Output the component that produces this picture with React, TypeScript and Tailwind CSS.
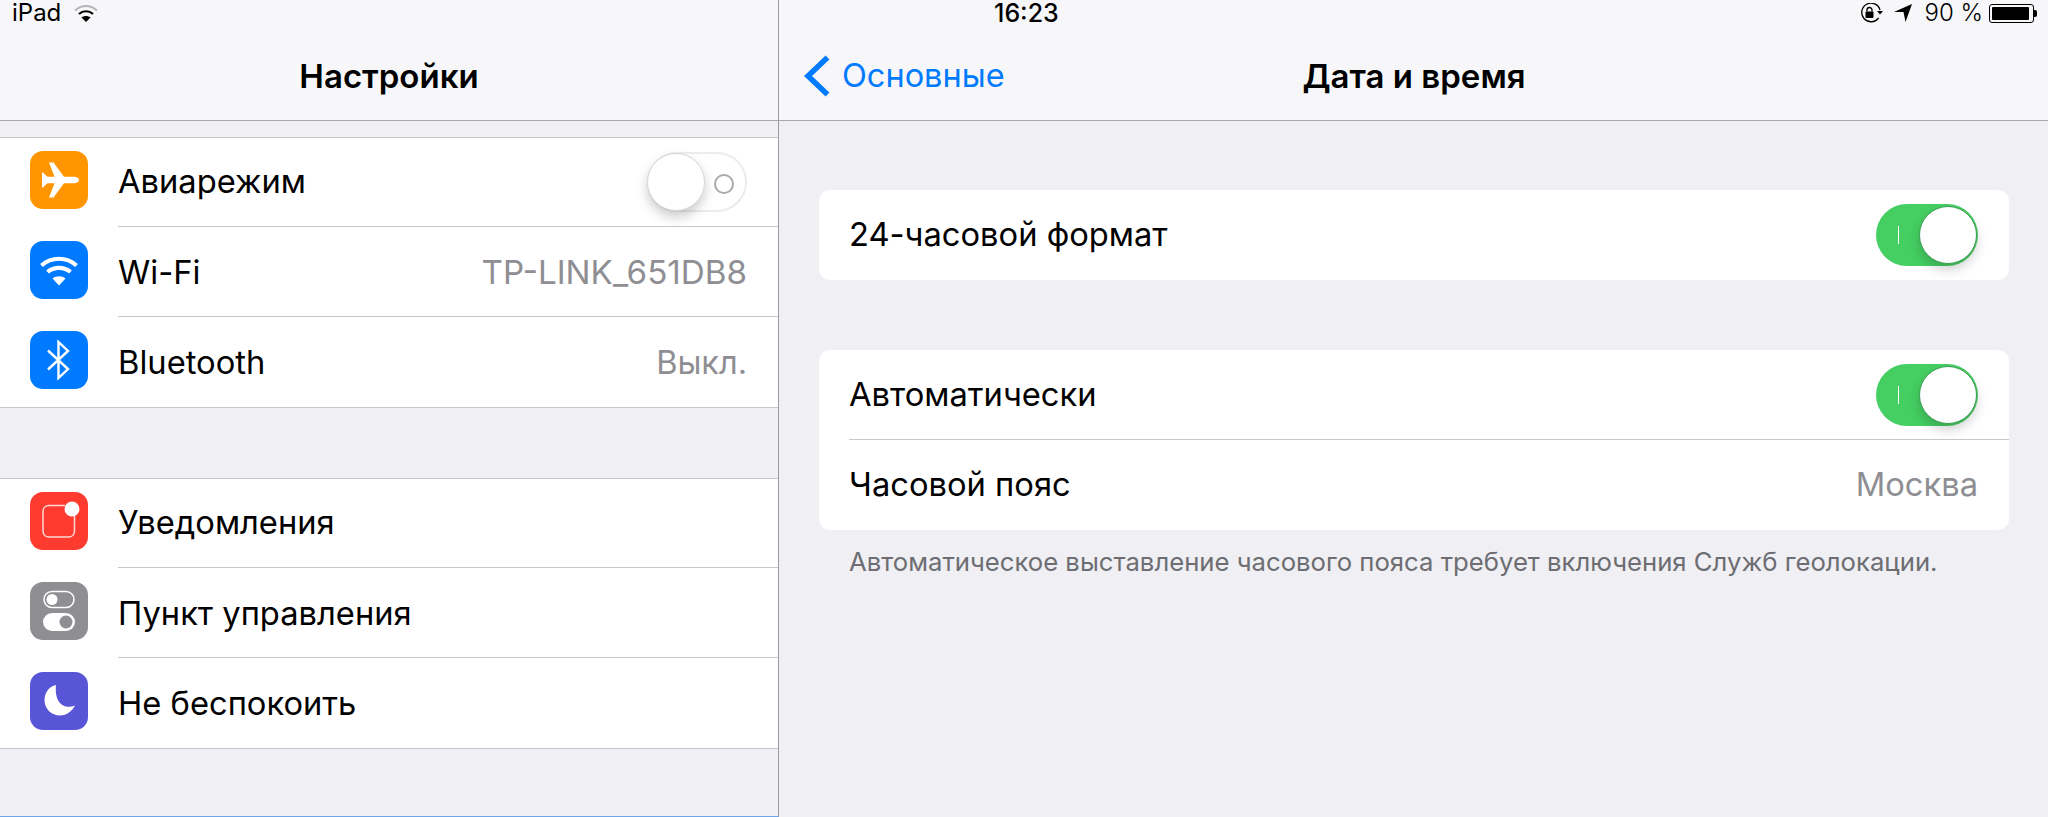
import React from "react";

function Plane() {
  return (
    <svg viewBox="0 0 58 58" className="w-full h-full">
      <path fill="#fff" d="M49 29c0-2.200-3-3.300-5.500-3.300H34L23.500 11.500H19L24.500 25.700H17.500L13 21.500H12V36.500H13L17.500 32.300H24.500L19 46.500H23.500L34 32.300H43.500C46 32.300 49 31.200 49 29Z" />
    </svg>
  );
}
function WifiGlyph() {
  return (
    <svg viewBox="0 0 58 58" className="w-full h-full" fill="none" stroke="#fff">
      <path strokeWidth="4.200" d="M11.500 24.500C21.500 15.500 36.500 15.500 46.500 24.500" />
      <path strokeWidth="4.200" d="M17.500 31C24 25.500 34 25.500 40.500 31" />
      <path fill="#fff" stroke="none" d="M29 44.500 22.500 37.500C26 34.500 32 34.500 35.500 37.500Z" />
    </svg>
  );
}
function BluetoothGlyph() {
  return (
    <svg viewBox="0 0 58 58" className="w-full h-full" fill="none" stroke="#fff" strokeWidth="2.400">
      <path d="M18 19.500 38 38 28.500 47V11L38 20 18 38.500" />
    </svg>
  );
}
function NotifGlyph() {
  return (
    <svg viewBox="0 0 58 58" className="w-full h-full" fill="none">
      <path stroke="#ffd9d6" strokeWidth="1.500" d="M35 13.500H19C15.500 13.500 13 16 13 19.500V39C13 42.500 15.500 45 19 45H38.500C42 45 44.500 42.500 44.500 39V24" />
      <circle cx="42" cy="17" r="7.500" fill="#fff" />
    </svg>
  );
}
function ControlGlyph() {
  return (
    <svg viewBox="0 0 58 58" className="w-full h-full" fill="none">
      <rect x="14" y="9.500" width="30" height="16" rx="8" stroke="#fff" strokeWidth="1.500" />
      <circle cx="22" cy="17.500" r="5.500" fill="#fff" />
      <rect x="13" y="31" width="32" height="18" rx="9" fill="#fff" />
      <circle cx="36" cy="40" r="6.500" fill="#8e8e93" />
    </svg>
  );
}
function MoonGlyph() {
  return (
    <svg viewBox="0 0 58 58" className="w-full h-full">
      <path fill="#fff" d="M26 13C17 15 14.500 23 14.500 28C14.500 37 21.500 43.500 30 43.500C37 43.500 42 39 45 33.500C36 37.500 24 33 26 13Z" />
    </svg>
  );
}

function Toggle({ on }: { on: boolean }) {
  if (on) {
    return (
      <div className="relative w-[102px] h-[62px] rounded-full bg-[#45cf62] shrink-0">
        <div className="absolute left-[22px] top-[22px] w-px h-[18px] bg-white" />
        <div className="absolute left-[43px] top-[2px] w-[58px] h-[58px] rounded-full bg-white border border-[#3a9e52] shadow-[0_6px_12px_rgba(0,0,0,0.18)]" />
      </div>
    );
  }
  return (
    <div className="relative w-[100px] h-[60px] rounded-full bg-white border-2 border-[#ececee] shrink-0">
      <div className="absolute left-[65px] top-[20px] w-[20px] h-[20px] rounded-full border-2 border-[#a9a9ad]" />
      <div className="absolute left-[-2px] top-[-1px] w-[58px] h-[58px] rounded-full bg-white border border-[#d8d8da] shadow-[0_6px_12px_rgba(0,0,0,0.2)]" />
    </div>
  );
}

type RowProps = {
  color: string;
  glyph: React.ReactNode;
  label: string;
  value?: string;
  valueClass?: string;
  right?: React.ReactNode;
  first?: boolean;
};

function Row({ color, glyph, label, value, valueClass, right, first }: RowProps) {
  return (
    <div className={first ? "flex h-[89px]" : "flex h-[90px]"}>
      <div className={first ? "w-[118px] shrink-0 pl-[30px] pt-[13px]" : "w-[118px] shrink-0 pl-[30px] pt-[14px]"}>
        <div className={`w-[58px] h-[58px] rounded-[13px] ${color}`}>{glyph}</div>
      </div>
      <div className={first ? "flex-1 flex items-center justify-between pr-[31px] border-b border-[#c8c8cc] pb-px" : "flex-1 flex items-center justify-between pr-[31px] border-b border-[#c8c8cc] pt-[2px]"}>
        <span className="text-[32.7px] text-black">{label}</span>
        {value ? <span className={valueClass ?? "text-[32.5px] text-[#8e8e93]"}>{value}</span> : null}
        {right}
      </div>
    </div>
  );
}

function StatusLeft() {
  return (
    <div className="h-[24px] pt-[2px] flex items-center pl-[12px] gap-[13px] text-[24px] leading-[22px] text-black">
      <span>iPad</span>
      <svg viewBox="0 0 24 18" className="w-[24px] h-[18px]" fill="none">
        <path stroke="#b5b5b8" strokeWidth="2" d="M1 6.500C7.500 .5 16.500 .5 23 6.500" />
        <path stroke="#000" strokeWidth="2.200" d="M5 10C9 6.300 15 6.300 19 10" />
        <path fill="#000" d="M12 18 7.500 13.500C10 11.500 14 11.500 16.500 13.500Z" />
      </svg>
    </div>
  );
}

function StatusRight() {
  return (
    <div className="h-[24px] pt-[2px] flex items-center text-black leading-[22px]">
      <span className="pl-[215px] text-[25px] font-medium">16:23</span>
      <div className="ml-auto flex items-center pr-[11px]">
        <svg viewBox="0 0 24 20" className="w-[24px] h-[20px]" fill="none">
          <path stroke="#000" strokeWidth="1.300" d="M21 7A9.300 9.300 0 1 0 19.500 15" />
          <path fill="#000" d="M18 8H24L21 11.500Z" />
          <rect x="6.500" y="8.500" width="8" height="6.500" rx="1" fill="#000" />
          <path stroke="#000" strokeWidth="1.300" d="M8 8.500V7A2.500 2.500 0 0 1 13 7V8.500" />
        </svg>
        <svg viewBox="0 0 18 18" className="w-[18px] h-[18px] ml-[11px]">
          <path fill="#000" d="M18 0 0 8H9.500L11.500 18Z" />
        </svg>
        <span className="ml-[13px] text-[24px] font-light">90 %</span>
        <div className="ml-[6px] flex items-center">
          <div className="w-[45px] h-[19px] rounded-[3px] border border-black p-[2px]">
            <div className="w-[37px] h-full bg-black rounded-[1px]" />
          </div>
          <div className="w-[3px] h-[7px] bg-black rounded-r-[2px]" />
        </div>
      </div>
    </div>
  );
}

export default function App() {
  return (
    <div className="flex w-[2048px] h-[817px] bg-[#efeff4] font-['Inter','Liberation_Sans',sans-serif]">
      <div className="w-[779px] shrink-0 border-r border-[#9a9a9f] border-b border-b-[#6fa5e8] flex flex-col">
        <div className="h-[121px] bg-[#f7f7f9] border-b border-[#a9a9ac] shrink-0">
          <StatusLeft />
          <div className="h-[96px] flex items-center justify-center pt-[8px] text-[33px] leading-[40px] font-semibold text-black">
            Настройки
          </div>
        </div>
        <div className="mt-[16px] bg-white border-y border-[#c8c8cc] [&>div:last-child>div:last-child]:border-b-0">
          <Row first color="bg-[#ff9500]" glyph={<Plane />} label="Авиарежим" right={<Toggle on={false} />} />
          <Row color="bg-[#007aff]" glyph={<WifiGlyph />} label="Wi-Fi" value="TP-LINK_651DB8" valueClass="text-[33.2px] text-[#8e8e93]" />
          <Row color="bg-[#007aff]" glyph={<BluetoothGlyph />} label="Bluetooth" value="Выкл." />
        </div>
        <div className="mt-[70px] bg-white border-y border-[#c8c8cc] [&>div:last-child>div:last-child]:border-b-0">
          <Row first color="bg-[#ff3b30]" glyph={<NotifGlyph />} label="Уведомления" />
          <Row color="bg-[#8e8e93]" glyph={<ControlGlyph />} label="Пункт управления" />
          <Row color="bg-[#5856d6]" glyph={<MoonGlyph />} label="Не беспокоить" />
        </div>
      </div>

      <div className="flex-1 flex flex-col">
        <div className="h-[121px] bg-[#f7f7f9] border-b border-[#a9a9ac] shrink-0">
          <StatusRight />
          <div className="relative h-[96px] flex items-center justify-center pt-[8px] pl-[1px] text-[33px] leading-[40px] font-semibold text-black">
            Дата и время
            <div className="absolute left-[24px] top-[31px] flex items-center gap-[12px] text-[32.5px] font-normal text-[#007aff]">
              <svg viewBox="0 0 27 42" className="w-[27px] h-[42px]" fill="none">
                <path stroke="#007aff" strokeWidth="5.500" d="M24.500 2.500 5 21 24.500 39.500" />
              </svg>
              <span>Основные</span>
            </div>
          </div>
        </div>
        <div className="pl-[40px] pr-[39px] pt-[69px]">
          <div className="h-[90px] rounded-[11px] bg-white pl-[30px] pr-[31px] flex items-center justify-between">
            <span className="text-[32.7px] text-black">24-часовой формат</span>
            <Toggle on />
          </div>
          <div className="mt-[70px] rounded-[11px] bg-white pl-[30px]">
            <div className="h-[90px] flex items-center justify-between pr-[31px] border-b border-[#c8c8cc]">
              <span className="text-[32.7px] text-black">Автоматически</span>
              <Toggle on />
            </div>
            <div className="h-[90px] flex items-center justify-between pr-[31px]">
              <span className="text-[32.7px] text-black">Часовой пояс</span>
              <span className="text-[32.7px] text-[#8e8e93]">Москва</span>
            </div>
          </div>
          <p className="mt-[16px] pl-[30px] text-[25.7px] leading-[32px] text-[#6d6d72]">
            Автоматическое выставление часового пояса требует включения Служб геолокации.
          </p>
        </div>
      </div>
    </div>
  );
}
